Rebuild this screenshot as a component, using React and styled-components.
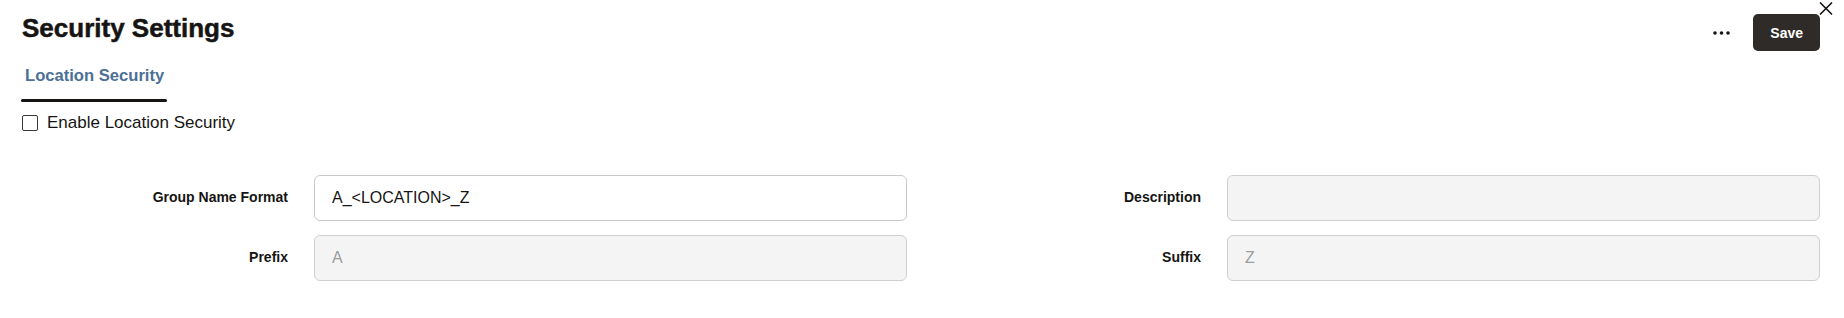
import React from "react";
import styled, { createGlobalStyle } from "styled-components";

const GlobalStyle = createGlobalStyle`
  body {
    margin: 0;
    background: #ffffff;
    color: #161513;
    font-family: "Liberation Sans", Arial, sans-serif;
  }
`;

const Page = styled.div`
  position: relative;
  padding: 0 24px 0 22px;
`;

const Header = styled.div`
  display: flex;
  flex-direction: row;
  justify-content: space-between;
  align-items: flex-start;
`;

const Title = styled.h1`
  margin: 12px 0 0;
  font-size: 26px;
  line-height: 32px;
  font-weight: 700;
  -webkit-text-stroke: 0.5px #161513;
  color: #161513;
`;

const Actions = styled.div`
  display: flex;
  align-items: center;
  gap: 23px;
  margin-top: 14px;
  height: 37px;
`;

const IconButton = styled.button`
  display: flex;
  align-items: center;
  justify-content: center;
  padding: 0;
  border: 0;
  background: none;
  color: #161513;
  cursor: pointer;
`;

const SaveButton = styled.button`
  height: 37px;
  padding: 0 17px;
  border: 0;
  border-radius: 5px;
  background: #2f2b28;
  color: #ffffff;
  font-family: inherit;
  font-size: 14px;
  font-weight: 700;
  cursor: pointer;
`;

const CloseButton = styled(IconButton)`
  position: absolute;
  top: 2px;
  right: 11px;
`;

const TabBar = styled.div`
  display: flex;
  margin-top: 15px;
  margin-left: -1px;
`;

const Tab = styled.div`
  display: flex;
  flex-direction: column;
  padding: 0 3px 0 4px;
  font-size: 16.6px;
  line-height: 20px;
  font-weight: 700;
  color: ${(p) => (p.$selected ? "#4c7095" : "#161513")};

  &::after {
    content: "";
    display: block;
    margin: 13px -3px 0 -4px;
    height: 3px;
    border-radius: 2px;
    background: ${(p) => (p.$selected ? "#161513" : "transparent")};
  }
`;

const CheckRow = styled.label`
  display: flex;
  align-items: center;
  gap: 9px;
  margin-top: 11px;
  height: 20px;
  font-size: 17px;
  line-height: 20px;
  width: max-content;
`;

const CheckBox = styled.span`
  width: 16px;
  height: 16px;
  box-sizing: border-box;
  border: 1.5px solid #3b3936;
  border-radius: 2px;
`;

const Form = styled.div`
  display: grid;
  grid-template-columns: 1fr 1fr;
  column-gap: 28px;
  row-gap: 14px;
  margin-top: 42px;
`;

const Field = styled.div`
  display: grid;
  grid-template-columns: 266px 1fr;
  column-gap: 26px;
  align-items: center;
`;

const FieldLabel = styled.label`
  text-align: right;
  padding-bottom: 3px;
  font-size: 14px;
  font-weight: 700;
  color: #161513;
`;

const TextInput = styled.input`
  box-sizing: border-box;
  width: 100%;
  height: 46px;
  padding: 0 17px;
  border: 1px solid ${(p) => (p.readOnly ? "#cfcfcf" : "#c9c9c9")};
  border-radius: 6px;
  background: ${(p) => (p.readOnly ? "#f4f4f4" : "#ffffff")};
  color: ${(p) => (p.readOnly ? "#9d9d9d" : "#161513")};
  font-family: inherit;
  font-size: 16px;
  outline: none;
`;

const DotsIcon = () => (
  <svg width="17" height="4" viewBox="0 0 17 4">
    <circle cx="2" cy="2" r="1.8" fill="currentColor" />
    <circle cx="8.5" cy="2" r="1.8" fill="currentColor" />
    <circle cx="15" cy="2" r="1.8" fill="currentColor" />
  </svg>
);

const CloseIcon = () => (
  <svg width="14" height="13" viewBox="0 0 14 13">
    <path d="M1 0.5 L13 12.5 M13 0.5 L1 12.5" stroke="currentColor" strokeWidth="1.6" />
  </svg>
);

const fields = [
  { label: "Group Name Format", value: "A_<LOCATION>_Z", readOnly: false },
  { label: "Description", value: "", readOnly: true },
  { label: "Prefix", value: "A", readOnly: true },
  { label: "Suffix", value: "Z", readOnly: true },
];

const App = () => {
  return (
    <Page>
      <GlobalStyle />
      <Header>
        <Title>Security Settings</Title>
        <Actions>
          <IconButton aria-label="More actions">
            <DotsIcon />
          </IconButton>
          <SaveButton>Save</SaveButton>
        </Actions>
      </Header>
      <CloseButton aria-label="Close">
        <CloseIcon />
      </CloseButton>

      <TabBar>
        <Tab $selected>Location Security</Tab>
      </TabBar>

      <CheckRow>
        <CheckBox />
        Enable Location Security
      </CheckRow>

      <Form>
        {fields.map((f) => (
          <Field key={f.label}>
            <FieldLabel>{f.label}</FieldLabel>
            <TextInput defaultValue={f.value} readOnly={f.readOnly} />
          </Field>
        ))}
      </Form>
    </Page>
  );
};

export default App;
